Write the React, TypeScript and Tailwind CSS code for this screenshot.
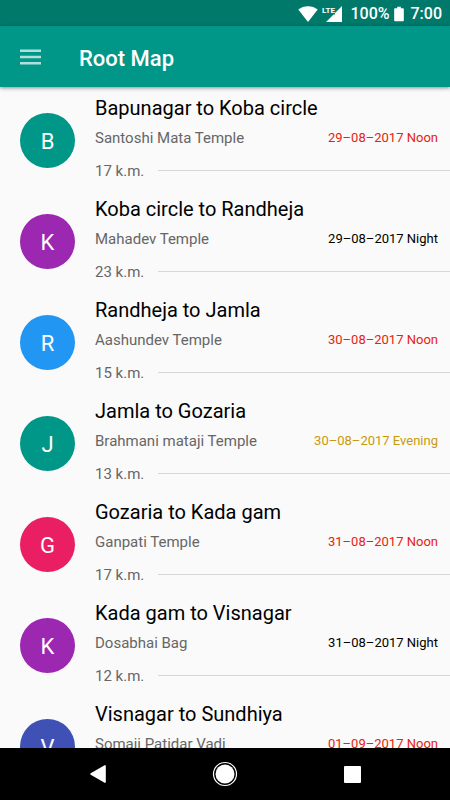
import React from 'react';

type Slot = 'Noon' | 'Evening' | 'Night';

interface RouteStop {
  title: string;
  place: string;
  date: string;
  slot: Slot;
  distance: string;
  color: string;
}

const SLOT_COLORS: Record<Slot, string> = {
  Noon: 'text-[#e8220c]',
  Evening: 'text-[#c8990c]',
  Night: 'text-black',
};

const STOPS: RouteStop[] = [
  { title: 'Bapunagar to Koba circle', place: 'Santoshi Mata Temple', date: '29–08–2017', slot: 'Noon', distance: '17 k.m.', color: 'bg-[#009688]' },
  { title: 'Koba circle to Randheja', place: 'Mahadev Temple', date: '29–08–2017', slot: 'Night', distance: '23 k.m.', color: 'bg-[#9c27b0]' },
  { title: 'Randheja to Jamla', place: 'Aashundev Temple', date: '30–08–2017', slot: 'Noon', distance: '15 k.m.', color: 'bg-[#2196f3]' },
  { title: 'Jamla to Gozaria', place: 'Brahmani mataji Temple', date: '30–08–2017', slot: 'Evening', distance: '13 k.m.', color: 'bg-[#009688]' },
  { title: 'Gozaria to Kada gam', place: 'Ganpati Temple', date: '31–08–2017', slot: 'Noon', distance: '17 k.m.', color: 'bg-[#e91e63]' },
  { title: 'Kada gam to Visnagar', place: 'Dosabhai Bag', date: '31–08–2017', slot: 'Night', distance: '12 k.m.', color: 'bg-[#9c27b0]' },
  { title: 'Visnagar to Sundhiya', place: 'Somaji Patidar Vadi', date: '01–09–2017', slot: 'Noon', distance: '14 k.m.', color: 'bg-[#3f51b5]' },
];

const StatusBar: React.FC = () => (
  <div className="h-[26px] shrink-0 bg-[#00796b] text-white flex items-center justify-end pt-px pr-2 text-base leading-5 font-medium">
    <svg width="20" height="16" viewBox="0 0 20 16" fill="currentColor" aria-label="Wi-Fi">
      <path d="M10 16 .3 3.6C3 1.500 6.300.3 10 .3s7 1.200 9.700 3.300z" />
    </svg>
    <svg className="ml-1 overflow-visible" width="20" height="16" viewBox="0 0 20 16" fill="currentColor" aria-label="LTE signal">
      <path d="M20 0v16H4l7.500-7.500H13V7z" />
      <text x="0" y="7" fontSize="8" fontWeight="700" className="font-['Liberation_Sans_Narrow','Roboto',sans-serif]">LTE</text>
    </svg>
    <span className="ml-2">100%</span>
    <svg className="ml-1" width="10" height="16" viewBox="0 0 11 16" fill="currentColor" aria-label="Battery full">
      <path d="M3.500 0h4v1.600H10a.8.8 0 0 1 .8.8v12.800a.8.8 0 0 1-.8.8H1a.8.8 0 0 1-.8-.8V2.400a.8.8 0 0 1 .8-.8h2.500z" />
    </svg>
    <span className="ml-[7px]">7:00</span>
  </div>
);

const Toolbar: React.FC = () => (
  <header className="relative z-10 h-[61px] shrink-0 bg-[#009688] flex items-center pl-5 shadow-[0_1px_4px_rgba(0,0,0,0.45)]">
    <button type="button" aria-label="Open menu" className="w-[21px] text-[#b2dfdb]">
      <svg width="21" height="16" viewBox="0 0 21 16" fill="currentColor">
        <path d="M0 .5h21V3H0zM0 6.800h21v2.500H0zM0 13h21v2.500H0z" />
      </svg>
    </button>
    <h1 className="ml-[38px] pt-1 text-[22px] leading-7 font-medium text-white">Root Map</h1>
  </header>
);

const StopRow: React.FC<{ stop: RouteStop }> = ({ stop }) => (
  <li className="flex pl-5 pt-[7px] pb-[7px]">
    <div className="pt-[19px]">
      <div className={`w-[55px] h-[55px] pt-0.5 rounded-full flex items-center justify-center text-[22px] text-white ${stop.color}`}>
        {stop.title.charAt(0)}
      </div>
    </div>
    <div className="flex-1 min-w-0 ml-5">
      <h2 className="text-xl leading-7 text-black">{stop.title}</h2>
      <div className="flex items-center justify-between mt-[6px] pr-3">
        <p className="text-[15px] leading-5 text-[#666]">{stop.place}</p>
        <p className={`text-[13px] leading-5 ${SLOT_COLORS[stop.slot]}`}>{stop.date} {stop.slot}</p>
      </div>
      <div className="flex items-center mt-[13px]">
        <p className="w-[63px] text-[15px] leading-5 text-[#666]">{stop.distance}</p>
        <div className="flex-1 h-px mb-0.5 bg-[#d6d6d6]" />
      </div>
    </div>
  </li>
);

const NavigationBar: React.FC = () => (
  <nav className="h-[52px] shrink-0 bg-black text-white flex items-center justify-center gap-[101px]">
    <button type="button" aria-label="Back" className="w-[26px] flex justify-center">
      <svg width="16" height="18" viewBox="0 0 16 18" fill="currentColor">
        <path d="M14.600.2a.8.8 0 0 1 1.200.7v16.200a.8.8 0 0 1-1.200.7L.7 9.700a.8.8 0 0 1 0-1.400z" />
      </svg>
    </button>
    <button type="button" aria-label="Home">
      <svg width="26" height="26" viewBox="0 0 26 26">
        <circle cx="13" cy="13" r="11.500" fill="none" stroke="currentColor" strokeWidth="1.200" />
        <circle cx="13" cy="13" r="9.500" fill="currentColor" />
      </svg>
    </button>
    <button type="button" aria-label="Recent apps" className="w-[26px] flex justify-center">
      <svg width="17" height="17" viewBox="0 0 17 17" fill="currentColor">
        <rect width="17" height="17" rx="1" />
      </svg>
    </button>
  </nav>
);

const App: React.FC = () => {
  return (
    <div className="h-screen flex flex-col bg-[#fafafa] font-['Roboto',sans-serif]">
      <StatusBar />
      <Toolbar />
      <main className="flex-1 min-h-0 overflow-y-auto [scrollbar-width:none]">
        <ul>
          {STOPS.map((stop) => (
            <StopRow key={stop.title} stop={stop} />
          ))}
        </ul>
      </main>
      <NavigationBar />
    </div>
  );
};

export default App;
